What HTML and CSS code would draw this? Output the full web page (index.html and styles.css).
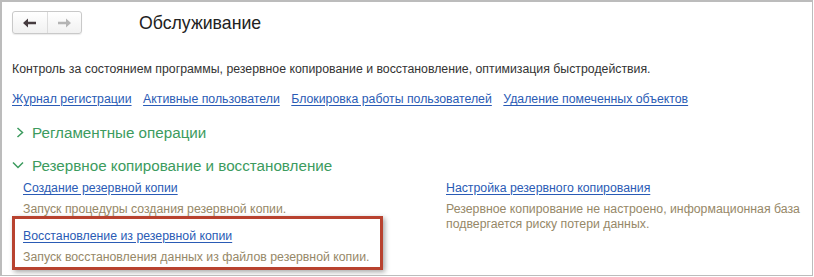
FILE: index.html
```html
<!DOCTYPE html>
<html lang="ru">
<head>
    <meta charset="UTF-8">
    <meta name="viewport" content="width=device-width, initial-scale=1.0">
    <title>Обслуживание</title>
    <link rel="stylesheet" href="styles.css">
</head>
<body>
    <div class="window">
        <div class="header">
            <div class="nav">
                <button class="nav-btn" aria-label="Назад">
                    <svg width="13" height="10" viewBox="0 0 13 10"><path d="M0 5 L5 0.5 L5 3.7 L13 3.7 L13 6.3 L5 6.3 L5 9.5 Z" fill="#463c40"/></svg>
                </button>
                <button class="nav-btn" aria-label="Вперёд">
                    <svg width="13" height="10" viewBox="0 0 13 10"><path d="M13 5 L8 0.5 L8 3.7 L0 3.7 L0 6.3 L8 6.3 L8 9.5 Z" fill="#b4b4b4"/></svg>
                </button>
            </div>
            <h1 class="title">Обслуживание</h1>
        </div>

        <p class="intro">Контроль за состоянием программы, резервное копирование и восстановление, оптимизация быстродействия.</p>

        <div class="links">
            <a href="#">Журнал регистрации</a>
            <a href="#">Активные пользователи</a>
            <a href="#">Блокировка работы пользователей</a>
            <a href="#">Удаление помеченных объектов</a>
        </div>

        <div class="group group-closed">
            <svg class="chevron" width="8" height="11" viewBox="0 0 8 11"><path d="M1.5 1 L6.5 5.5 L1.5 10" fill="none" stroke="#3c9b5e" stroke-width="1.5"/></svg>
            <span>Регламентные операции</span>
        </div>

        <div class="group group-open">
            <svg class="chevron" width="12" height="8" viewBox="0 0 12 8"><path d="M1 1.5 L6 6.5 L11 1.5" fill="none" stroke="#3c9b5e" stroke-width="1.5"/></svg>
            <span>Резервное копирование и восстановление</span>
        </div>

        <div class="group-body">
            <div class="col col-left">
                <div class="item">
                    <a href="#">Создание резервной копии</a>
                    <div class="hint">Запуск процедуры создания резервной копии.</div>
                </div>
                <div class="item highlight">
                    <a href="#">Восстановление из резервной копии</a>
                    <div class="hint">Запуск восстановления данных из файлов резервной копии.</div>
                </div>
            </div>
            <div class="col col-right">
                <div class="item">
                    <a href="#">Настройка резервного копирования</a>
                    <div class="hint">Резервное копирование не настроено, информационная база<br>подвергается риску потери данных.</div>
                </div>
            </div>
        </div>
    </div>
</body>
</html>
```

FILE: styles.css
```css
body {
    margin: 0;
    padding: 0;
    background: #fff;
    font-family: "Liberation Sans", Arial, sans-serif;
    font-size: 12.3px;
    color: #333;
}
.window {
    box-sizing: border-box;
    width: 813px;
    height: 276px;
    border: 2px solid #bcbcbc;
    border-right-width: 1px;
    border-bottom-width: 1px;
    padding: 9px 0 0 10px;
    overflow: hidden;
}
.header {
    display: flex;
    align-items: center;
    height: 23px;
}
.nav {
    display: flex;
    width: 70px;
    height: 23px;
    box-sizing: border-box;
    border: 1px solid #c9c9c9;
    border-radius: 3px;
    background: linear-gradient(#ffffff, #f1f1f1);
    box-shadow: 0 1px 1px rgba(0,0,0,0.08);
}
.nav-btn {
    flex: 1;
    display: flex;
    align-items: center;
    justify-content: center;
    padding: 0;
    border: none;
    background: transparent;
}
.nav-btn + .nav-btn {
    border-left: 1px solid #dcdcdc;
}
.title {
    margin: 0 0 0 57px;
    font-size: 17.7px;
    font-weight: normal;
    color: #222;
    line-height: 23px;
    position: relative;
    top: 1px;
}
.intro {
    margin: 27px 0 0 0;
    line-height: 16px;
}
.links {
    display: flex;
    gap: 11.5px;
    margin-top: 14px;
    line-height: 16px;
}
a {
    color: #2a5bb5;
    text-decoration: underline;
    text-underline-offset: 2px;
}
.group {
    display: flex;
    align-items: center;
    height: 20px;
    font-size: 15.2px;
    color: #3c9b5e;
}
.group-closed {
    margin-top: 15px;
}
.group-open {
    margin-top: 13px;
}
.group-closed .chevron {
    margin: 0 8px 0 4px;
}
.group-open .chevron {
    margin: 0 8px 0 0;
}
.group-body {
    display: flex;
    margin-top: 5px;
}
.col-left {
    width: 371px;
    flex: none;
}
.col-right {
    margin-left: 52px;
}
.item {
    padding-left: 11px;
    line-height: 16px;
}
.hint {
    margin-top: 6px;
    color: #968868;
    line-height: 15px;
}
.highlight {
    margin-top: -1px;
    border: 3px solid #b8422f;
    padding: 9px 0 2px 8px;
    box-shadow: 2px 2px 5px rgba(0,0,0,0.35);
}
```
